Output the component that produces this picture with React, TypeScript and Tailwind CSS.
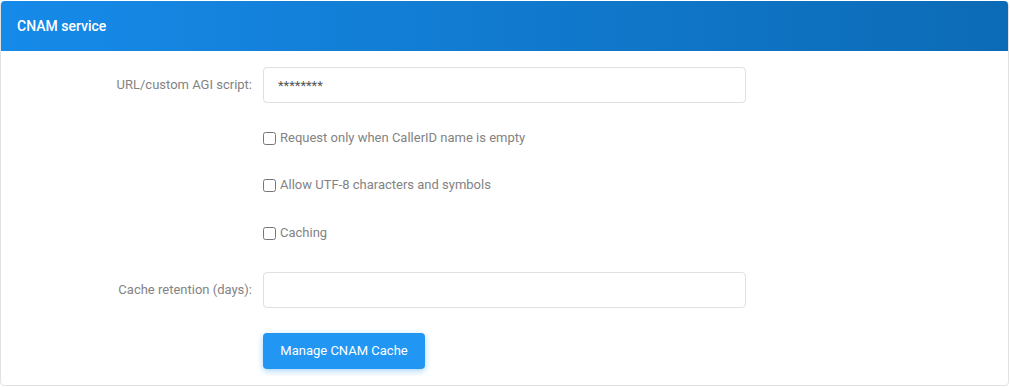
const FONT = { fontFamily: "Roboto, 'Noto Sans', sans-serif" };

function Row({ label, children }: { label?: string; children: React.ReactNode }) {
  return (
    <div className="flex items-center">
      <div className="w-[251px] shrink-0 text-right text-[13px] text-[#838383]">
        {label}
      </div>
      <div className="ml-[11px] w-[483px]">{children}</div>
    </div>
  );
}

function Check({ label }: { label: string }) {
  return (
    <label className="flex h-[20px] items-center text-[13px] text-[#838383]">
      <input type="checkbox" className="m-0 h-[13px] w-[13px]" />
      <span className="ml-[4px]">{label}</span>
    </label>
  );
}

export default function App() {
  return (
    <div className="bg-white pt-px" style={FONT}>
      <div className="w-[1009px] rounded-[4px] border border-[#e2e2e2] bg-white">
        <div className="-mt-px flex h-[50px] items-center rounded-t-[4px] bg-gradient-to-r from-[#168ae9] to-[#0c6bb6] px-[16px]">
          <span className="text-[14px] font-medium text-white">CNAM service</span>
        </div>
        <div className="pb-[16px] pt-[16px]">
          <Row label="URL/custom AGI script:">
            <input
              type="text"
              defaultValue="********"
              className="h-[36px] w-full rounded-[4px] border border-[#e0e0e0] px-[14px] text-[13px] text-[#555] outline-none"
            />
          </Row>
          <div className="mt-[25px]">
            <Row>
              <Check label="Request only when CallerID name is empty" />
            </Row>
          </div>
          <div className="mt-[27px]">
            <Row>
              <Check label="Allow UTF-8 characters and symbols" />
            </Row>
          </div>
          <div className="mt-[28px]">
            <Row>
              <Check label="Caching" />
            </Row>
          </div>
          <div className="mt-[29px]">
            <Row label="Cache retention (days):">
              <input
                type="text"
                className="h-[36px] w-full rounded-[4px] border border-[#e0e0e0] px-[14px] text-[13px] text-[#555] outline-none"
              />
            </Row>
          </div>
          <div className="mt-[25px]">
            <Row>
              <button className="h-[36px] w-[162px] rounded-[4px] bg-[#2196f3] text-[13px] text-white shadow-[0_2px_6px_rgba(33,150,243,0.4)]">
                Manage CNAM Cache
              </button>
            </Row>
          </div>
        </div>
      </div>
    </div>
  );
}
